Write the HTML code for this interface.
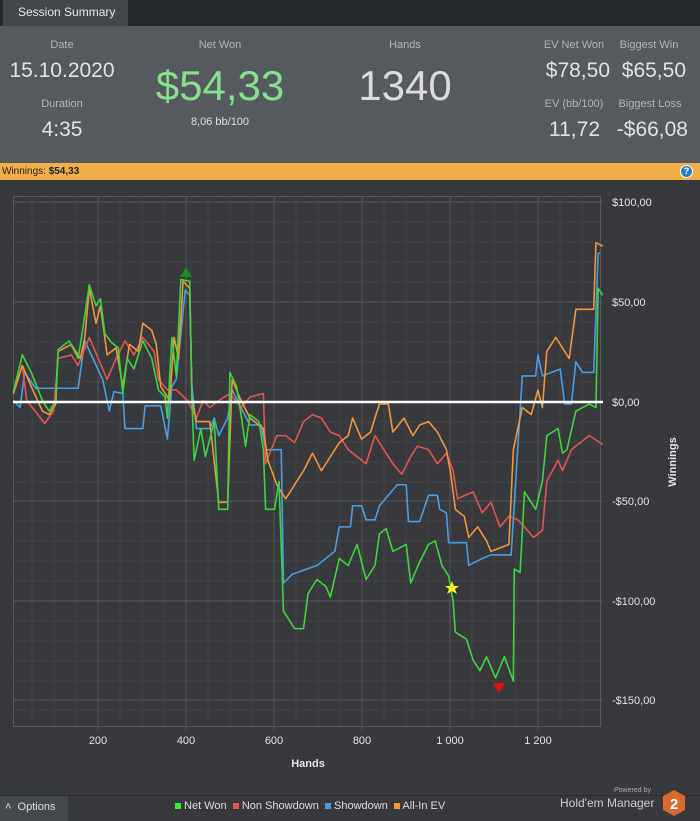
<!DOCTYPE html>
<html><head><meta charset="utf-8"><style>
*{margin:0;padding:0;box-sizing:border-box}
body{width:700px;height:821px;background:#37393c;font-family:"Liberation Sans",sans-serif;position:relative;overflow:hidden;color:#ddd}
.a{position:absolute}
.lbl{font-size:11px;color:#b4b6b8;text-align:center}
.val{color:#e2e2e2;text-align:center}
</style></head><body>
<div class="a" style="left:0;top:0;width:700px;height:27px;background:#26292c"></div>
<div class="a" style="left:3px;top:0;width:125px;height:26px;background:#43464a;font-size:12px;color:#e8e8e8;padding:5px 0 0 15px">Session Summary</div>
<div class="a" style="left:0;top:26px;width:700px;height:137px;background:#56595d"></div>
<div class="a lbl" style="left:2px;top:39px;width:120px">Date</div>
<div class="a val" style="left:0;top:59px;width:124px;font-size:21px">15.10.2020</div>
<div class="a lbl" style="left:2px;top:98px;width:120px">Duration</div>
<div class="a val" style="left:2px;top:118px;width:120px;font-size:21px">4:35</div>
<div class="a lbl" style="left:160px;top:39px;width:120px">Net Won</div>
<div class="a" style="left:140px;top:62px;width:160px;text-align:center;font-size:42px;color:#86e18d">$54,33</div>
<div class="a" style="left:160px;top:116px;width:120px;text-align:center;font-size:11px;color:#e0e0e0">8,06 bb/100</div>
<div class="a lbl" style="left:345px;top:39px;width:120px">Hands</div>
<div class="a val" style="left:335px;top:62px;width:140px;font-size:42px;color:#dcdcdc">1340</div>
<div class="a lbl" style="left:530px;top:39px;width:88px">EV Net Won</div>
<div class="a lbl" style="left:614px;top:39px;width:70px">Biggest Win</div>
<div class="a val" style="left:530px;top:59px;width:80px;font-size:21px;text-align:right">$78,50</div>
<div class="a val" style="left:612px;top:59px;width:74px;font-size:21px;text-align:right">$65,50</div>
<div class="a lbl" style="left:530px;top:98px;width:88px">EV (bb/100)</div>
<div class="a lbl" style="left:614px;top:98px;width:72px">Biggest Loss</div>
<div class="a val" style="left:530px;top:118px;width:70px;font-size:21px;text-align:right">11,72</div>
<div class="a val" style="left:604px;top:118px;width:84px;font-size:21px;text-align:right">-$66,08</div>
<div class="a" style="left:0;top:163px;width:700px;height:17px;background:#f2ae48;font-size:10px;color:#222;padding:3px 0 0 2px">Winnings: <b>$54,33</b></div>
<div class="a" style="left:680px;top:165px;width:13px;height:13px;border-radius:50%;background:#2a7bc9;border:1px solid #fff;color:#fff;font-size:9px;font-weight:bold;text-align:center;line-height:11px">?</div>
<svg class="a" style="left:0;top:0" width="700" height="821">
<g stroke="#414447" stroke-width="1">
<path d="M13 222H600M13 242H600M13 262H600M13 282H600M13 322H600M13 342H600M13 362H600M13 382H600M13 422H600M13 442H600M13 462H600M13 482H600M13 521H600M13 541H600M13 561H600M13 581H600M13 621H600M13 641H600M13 661H600M13 681H600M13 710H600"/>
<path d="M32 196V726M54 196V726M76 196V726M120 196V726M142 196V726M164 196V726M208 196V726M230 196V726M252 196V726M296 196V726M318 196V726M340 196V726M384 196V726M406 196V726M428 196V726M472 196V726M494 196V726M516 196V726M560 196V726M582 196V726"/>
</g>
<g stroke="#55585c" stroke-width="1">
<path d="M13 202H603M13 302H603M13 501H603M13 601H603M13 700H603"/>
<path d="M98 196V730M186 196V730M274 196V730M362 196V730M450 196V730M538 196V730"/>
</g>
<rect x="13.5" y="196.5" width="587" height="530" fill="none" stroke="#55585c"/>
<g transform="translate(0,190) scale(0.4464,0.3509)" fill="none" stroke-width="1.6" vector-effect="non-scaling-stroke" stroke-linejoin="round">
<polyline vector-effect="non-scaling-stroke" stroke="#4a9ee0" points="30,600 45,620 55,520 80,565 140,565 175,565 190,430 230,540 245,630 255,575 275,580 280,680 320,680 325,615 360,615 375,710 385,560 395,540 415,285 425,300 430,560 440,680 470,680 480,650 490,700 510,650 520,570 560,670 585,670 595,740 630,740 635,1120 655,1095 710,1070 750,1030 760,960 785,960 790,900 810,900 820,940 840,940 850,900 870,870 890,840 910,840 915,945 940,945 960,870 980,870 985,910 1000,920 1005,1005 1045,1005 1050,1070 1080,1050 1100,1040 1145,1040 1170,530 1200,530 1205,470 1215,530 1255,510 1265,610 1280,610 1290,490 1305,520 1330,520 1340,180 1345,180"/>
<polyline vector-effect="non-scaling-stroke" stroke="#e05454" points="30,580 50,500 60,600 100,665 120,630 130,480 160,470 175,500 200,420 220,480 240,540 260,480 280,430 300,470 320,420 345,460 355,540 375,570 395,570 420,600 440,650 455,600 470,620 490,600 515,580 540,620 560,590 590,580 595,780 620,700 640,700 660,720 680,660 700,640 720,650 740,690 760,700 780,740 800,760 820,780 840,700 860,740 880,780 900,810 920,760 935,730 960,740 980,780 1000,750 1015,800 1025,880 1060,860 1080,920 1100,890 1120,960 1140,930 1160,940 1175,960 1195,990 1215,970 1225,830 1250,770 1260,800 1280,740 1300,720 1320,700 1350,725"/>
<polyline vector-effect="non-scaling-stroke" stroke="#f0963c" points="30,580 50,500 70,560 95,630 110,640 125,610 130,460 160,440 180,480 190,420 200,280 215,380 225,330 240,470 260,450 275,560 290,440 310,460 320,380 340,400 350,440 360,560 380,600 390,420 400,480 410,260 425,280 430,600 440,660 470,660 490,890 510,890 520,540 540,600 560,650 590,680 600,770 620,840 640,880 660,840 680,800 700,750 720,800 740,760 760,720 780,700 790,650 810,710 830,690 850,610 870,610 880,690 905,650 925,700 940,670 960,660 980,690 1000,740 1010,810 1020,910 1040,930 1050,990 1070,960 1090,1000 1100,1030 1120,1020 1140,1010 1150,740 1170,620 1190,640 1205,570 1215,620 1225,460 1245,420 1260,450 1275,480 1290,340 1330,340 1335,150 1350,160"/>
<polyline vector-effect="non-scaling-stroke" stroke="#3fd33f" points="30,575 50,470 70,520 95,600 110,630 125,600 130,455 155,430 175,480 185,400 200,270 215,330 225,310 235,410 250,435 265,450 275,580 285,480 300,510 320,430 340,480 355,570 370,590 375,650 385,420 395,530 405,255 425,260 430,600 435,770 450,680 460,760 480,660 490,910 510,910 515,520 530,560 540,640 550,730 560,640 580,660 590,740 595,910 615,910 625,830 635,1200 660,1250 680,1250 690,1150 710,1110 730,1130 740,1160 760,1050 780,1070 800,1010 820,1110 840,1070 850,980 865,965 880,1030 910,1010 920,1120 940,1060 960,1010 975,1000 990,1070 1005,1100 1015,1170 1020,1260 1045,1280 1060,1340 1075,1370 1090,1330 1110,1390 1130,1330 1150,1400 1152,1080 1165,1090 1175,860 1200,910 1215,830 1225,700 1250,680 1260,750 1270,740 1290,630 1320,610 1335,620 1340,280 1350,300"/>
</g>
<line x1="13" y1="402" x2="603" y2="402" stroke="#fff" stroke-width="2.5"/>
<polygon points="186,267 180,277 192,277" fill="#1a8a1a"/>
<polygon points="493,683 505,683 499,693" fill="#e01010"/>
<polygon points="452,581 454,586 459,586 455,589 457,594 452,591 447,594 449,589 445,586 450,586" fill="#f5f020"/>
<g font-size="11" fill="#e4e4e4">
<text x="612" y="206">$100,00</text><text x="612" y="306">$50,00</text><text x="612" y="406">$0,00</text>
<text x="612" y="505">-$50,00</text><text x="612" y="605">-$100,00</text><text x="612" y="704">-$150,00</text>
<g text-anchor="middle"><text x="98" y="744">200</text><text x="186" y="744">400</text><text x="274" y="744">600</text><text x="362" y="744">800</text><text x="450" y="744">1 000</text><text x="538" y="744">1 200</text>
<text x="308" y="767" font-weight="bold">Hands</text></g>
<text transform="translate(676,462) rotate(-90)" text-anchor="middle" font-weight="bold">Winnings</text>
</g>
</svg>
<div class="a" style="left:0;top:795px;width:700px;height:1px;background:#2a2c2e"></div>
<div class="a" style="left:0;top:796px;width:68px;height:25px;background:#45484c;font-size:11px;color:#ddd;padding:5px 0 0 5px">&#708;&nbsp; Options</div>
<div class="a" style="left:175px;top:800px;font-size:11px;color:#ddd;white-space:nowrap">
<span style="display:inline-block;width:6px;height:6px;background:#3fe83f"></span> Net Won&nbsp;
<span style="display:inline-block;width:6px;height:6px;background:#e05454"></span> Non Showdown&nbsp;
<span style="display:inline-block;width:6px;height:6px;background:#4a9ee0"></span> Showdown&nbsp;
<span style="display:inline-block;width:6px;height:6px;background:#f0963c"></span> All-In EV</div>
<div class="a" style="left:614px;top:787px;font-size:7px;color:#aaa">Powered by</div>
<div class="a" style="left:560px;top:796px;font-size:12px;color:#ccc">Hold'em Manager</div>
<svg class="a" style="left:662px;top:789px" width="24" height="28"><polygon points="12,1 23,7 23,21 12,27 1,21 1,7" fill="#d9692d"/><text x="12" y="20" text-anchor="middle" font-size="15" font-weight="bold" fill="#fff" font-family="Liberation Sans">2</text></svg>
</body></html>
